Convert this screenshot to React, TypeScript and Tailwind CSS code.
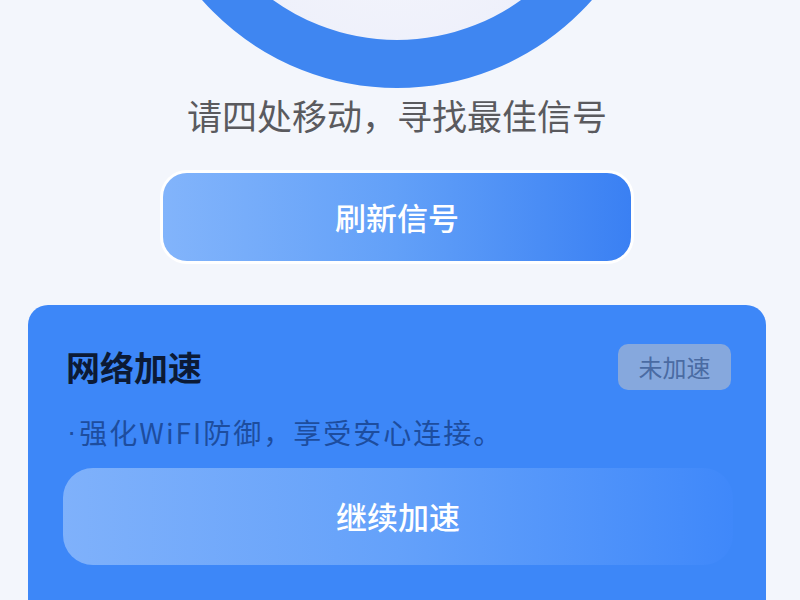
export default function App() {
  return (
    <div
      className="w-[800px] h-[600px] overflow-hidden bg-[#f3f6fc] flex flex-col items-center pr-[6px]"
      style={{ fontFamily: '"Noto Sans CJK SC", "Noto Sans", sans-serif' }}
    >
      {/* signal ring */}
      <div className="h-[88px] w-full flex justify-center overflow-hidden shrink-0">
        <div className="w-[520px] h-[520px] shrink-0 mt-[-432px] rounded-full border-[48px] border-[#3f86f1] bg-[radial-gradient(circle_at_50%_60%,#f7f8fd_0%,#eceefa_70%,#e4e7f7_100%)]" />
      </div>

      <p className="shrink-0 mt-[7px] text-[35px] leading-[40px] text-[#5a5a5e]">
        请四处移动，寻找最佳信号
      </p>

      <button className="shrink-0 mt-[38px] w-[468px] h-[88px] rounded-[24px] bg-gradient-to-r from-[#82b4fb] via-[#62a0f8] to-[#3a80f3] text-white text-[31px] font-medium shadow-[0_0_0_3px_#ffffff]">
        刷新信号
      </button>

      {/* acceleration card */}
      <div className="shrink-0 mt-[44px] w-[738px] h-[320px] rounded-[20px] bg-[#3d87f8] px-[35px] pt-[37px] flex flex-col">
        <div className="flex items-center justify-between pl-[3px]">
          <h2 className="text-[34px] leading-[50px] font-bold text-[#0c1a35]">网络加速</h2>
          <span className="w-[113px] h-[46px] rounded-[10px] bg-[#86a8dd] text-[#4a6ba3] text-[24px] flex items-center justify-center">
            未加速
          </span>
        </div>
        <p className="mt-[23px] pl-[4px] text-[28px] leading-[34px] tracking-[2px] text-[#1d4d9e] flex items-center">
          <span className="font-['Liberation_Sans'] mr-[3px] tracking-normal">·</span>
          强化WiFI防御，享受安心连接。
        </p>
        <button className="shrink-0 mt-[19px] h-[97px] w-[670px] rounded-[30px] bg-gradient-to-r from-[#7fb1fb] via-[#64a1fa] to-[#3f88fa] text-white text-[31px] font-medium">
          继续加速
        </button>
      </div>
    </div>
  );
}
